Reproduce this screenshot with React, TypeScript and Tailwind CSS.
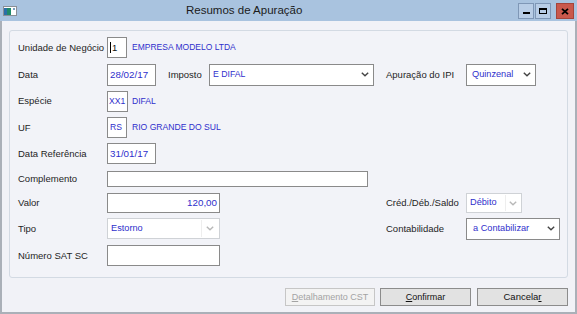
import React from "react";

const Chevron = ({ color = "#444" }: { color?: string }) => (
  <svg width="8" height="5" viewBox="0 0 8 5">
    <path d="M0.8 0.8 L4 3.8 L7.2 0.8" fill="none" stroke={color} strokeWidth="1.4" />
  </svg>
);

const Label = ({ children, w }: { children: React.ReactNode; w: string }) => (
  <div className={`${w} shrink-0 text-[9.5px] text-[#1e1e1e] leading-none`}>{children}</div>
);

export default function App() {
  const blue = "text-[#2f2fcc]";
  return (
    <div className="w-[577px] h-[314px] flex flex-col overflow-hidden" style={{ fontFamily: '"Liberation Sans", Arial, sans-serif' }}>
      {/* Title bar */}
      <div className="h-[21px] shrink-0 bg-[#a9c3df] flex items-center">
        <div className="ml-[3px] w-[14px] h-[10px]">
          <svg width="14" height="10" viewBox="0 0 14 10">
            <rect x="0.5" y="0.5" width="13" height="9" fill="#fff" stroke="#8a8f96" />
            <rect x="1" y="2" width="7" height="7" fill="#1f8a6a" />
            <rect x="1" y="2" width="3" height="7" fill="#2b6fa8" />
            <rect x="10" y="2" width="2" height="2" fill="#7aa0c0" />
          </svg>
        </div>
        <div className="ml-[169px] text-[11.5px] text-[#1b1b1b] leading-none">Resumos de Apuração</div>
        <div className="flex-1" />
        <div className="flex items-start mr-[3px] gap-[1px] h-[16px] self-start mt-[3px]">
          <div className="w-[16px] h-[16px] bg-[#b8cde6] border border-[#7f97b6] flex items-end justify-center pb-[4px]">
            <div className="w-[7px] h-[2px] bg-black" />
          </div>
          <div className="w-[16px] h-[16px] bg-[#b8cde6] border border-[#7f97b6] flex items-center justify-center">
            <div className="w-[8px] h-[6px] border border-black border-t-2" />
          </div>
          <div className="ml-[4px] w-[18px] h-[16px] bg-[#c9584c] border border-[#a5443a] flex items-center justify-center">
            <svg width="8" height="7" viewBox="0 0 8 7">
              <path d="M1 0.8 L7 6.2 M7 0.8 L1 6.2" stroke="#000" strokeWidth="1.8" />
            </svg>
          </div>
        </div>
      </div>

      {/* Body */}
      <div className="flex-1 bg-[#f1f2f7] border-l-2 border-r-2 border-b-2 border-[#aab0b8] flex flex-col">
        <div className="mt-[9px] ml-[7px] w-[559px] h-[248px] border border-[#d3dae3] rounded-[3px] bg-[#f2f3f8] flex flex-col pt-[3px] pl-[8px]">
          {/* Row 1 */}
          <div className="h-[27px] flex items-center">
            <Label w="w-[89px]">Unidade de Negócio</Label>
            <div className="w-[20px] h-[21px] bg-white border border-[#8a8a8a] flex items-center pl-[2px]">
              <div className="w-[1px] h-[11px] bg-black mr-[1px]" />
              <span className="text-[9.5px] text-[#111] leading-none">1</span>
            </div>
            <span className={`ml-[5px] text-[8.5px] ${blue} leading-none`}>EMPRESA MODELO LTDA</span>
          </div>
          {/* Row 2 */}
          <div className="h-[27px] flex items-center">
            <Label w="w-[89px]">Data</Label>
            <div className="w-[279px] flex items-center">
              <div className="w-[49px] h-[22px] bg-white border border-[#8a8a8a] flex items-center pl-[2px]">
                <span className={`text-[9.8px] ${blue} leading-none`}>28/02/17</span>
              </div>
              <Label w="ml-[12px] w-[41px]">Imposto</Label>
              <div className="w-[165px] h-[22px] bg-white border border-[#8a8a8a] flex items-center pl-[3px] pr-[4px]">
                <span className={`text-[8.7px] ${blue} leading-none flex-1`}>E DIFAL</span>
                <Chevron />
              </div>
            </div>
            <Label w="w-[80px]">Apuração do IPI</Label>
            <div className="w-[70px] h-[22px] bg-white border border-[#8a8a8a] flex items-center pl-[5px] pr-[4px]">
              <span className={`text-[9.2px] ${blue} leading-none flex-1`}>Quinzenal</span>
              <Chevron />
            </div>
          </div>
          {/* Row 3 */}
          <div className="h-[26px] flex items-center">
            <Label w="w-[89px]">Espécie</Label>
            <div className="w-[21px] h-[21px] bg-white border border-[#8a8a8a] flex items-center pl-[1px]">
              <span className={`text-[8.6px] ${blue} leading-none`}>XX1</span>
            </div>
            <span className={`ml-[4px] text-[8.6px] ${blue} leading-none`}>DIFAL</span>
          </div>
          {/* Row 4 */}
          <div className="h-[27px] flex items-center">
            <Label w="w-[89px]">UF</Label>
            <div className="w-[20px] h-[21px] bg-white border border-[#8a8a8a] flex items-center pl-[2px]">
              <span className={`text-[8.6px] ${blue} leading-none`}>RS</span>
            </div>
            <span className={`ml-[5px] text-[8.6px] ${blue} leading-none`}>RIO GRANDE DO SUL</span>
          </div>
          {/* Row 5 */}
          <div className="h-[25px] flex items-center">
            <Label w="w-[89px]">Data Referência</Label>
            <div className="w-[49px] h-[21px] bg-white border border-[#8a8a8a] flex items-center pl-[2px]">
              <span className={`text-[9.8px] ${blue} leading-none`}>31/01/17</span>
            </div>
          </div>
          {/* Row 6 */}
          <div className="h-[25px] flex items-center">
            <Label w="w-[89px]">Complemento</Label>
            <div className="w-[261px] h-[16px] bg-white border border-[#8a8a8a]" />
          </div>
          {/* Row 7 */}
          <div className="h-[24px] flex items-center">
            <Label w="w-[89px]">Valor</Label>
            <div className="w-[279px] flex items-center">
              <div className="w-[113px] h-[20px] bg-white border border-[#8a8a8a] flex items-center justify-end pr-[2px]">
                <span className={`text-[9.8px] ${blue} leading-none`}>120,00</span>
              </div>
            </div>
            <Label w="w-[80px]">Créd./Déb./Saldo</Label>
            <div className="w-[56px] h-[20px] bg-white border border-[#cfd2d6] flex items-center pl-[3px] pr-[2px]">
              <span className={`text-[9.2px] ${blue} leading-none flex-1`}>Débito</span>
              <div className="w-[14px] h-[16px] flex items-center justify-center border-l border-[#eeeeee]">
                <Chevron color="#b8b8b8" />
              </div>
            </div>
          </div>
          {/* Row 8 */}
          <div className="h-[27px] flex items-center">
            <Label w="w-[89px]">Tipo</Label>
            <div className="w-[279px] flex items-center">
              <div className="w-[113px] h-[21px] bg-white border border-[#cfd2d6] flex items-center pl-[3px] pr-[2px]">
                <span className={`text-[9.2px] ${blue} leading-none flex-1`}>Estorno</span>
                <div className="w-[16px] h-[17px] flex items-center justify-center border-l border-[#eeeeee]">
                  <Chevron color="#b8b8b8" />
                </div>
              </div>
            </div>
            <Label w="w-[80px]">Contabilidade</Label>
            <div className="w-[94px] h-[22px] bg-white border border-[#8a8a8a] flex items-center pl-[6px] pr-[4px]">
              <span className={`text-[9.2px] ${blue} leading-none flex-1`}>a Contabilizar</span>
              <Chevron />
            </div>
          </div>
          {/* Row 9 */}
          <div className="h-[27px] flex items-center">
            <Label w="w-[89px]">Número SAT SC</Label>
            <div className="w-[113px] h-[21px] bg-white border border-[#8a8a8a]" />
          </div>
        </div>

        {/* Buttons */}
        <div className="mt-[10px] mr-[7px] flex justify-end gap-[5px]">
          <div className="w-[90px] h-[18px] border border-[#c6c6c6] bg-[#f3f3f3] flex items-center justify-center text-[9px] text-[#a3a3a3] leading-none">
            <span><span className="underline">D</span>etalhamento CST</span>
          </div>
          <div className="w-[91px] h-[18px] border border-[#8c8c8c] bg-[#e2e2e2] flex items-center justify-center text-[9px] text-[#111] leading-none">
            <span><span className="underline">C</span>onfirmar</span>
          </div>
          <div className="ml-[1px] w-[91px] h-[18px] border border-[#8c8c8c] bg-[#e2e2e2] flex items-center justify-center text-[9.5px] text-[#111] leading-none">
            <span>Cancela<span className="underline">r</span></span>
          </div>
        </div>
      </div>
    </div>
  );
}
